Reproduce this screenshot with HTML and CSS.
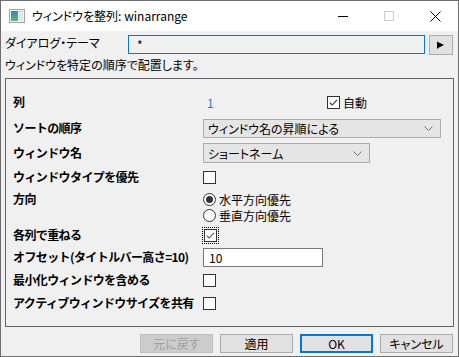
FILE: index.html
```html
<!DOCTYPE html>
<html lang="ja">
<head>
  <meta charset="UTF-8" />
  <title>ウィンドウを整列: winarrange</title>
  <link rel="stylesheet" href="styles.css">
</head>
<body>
  <div class="window">
    <div class="titlebar">
      <svg class="app-icon" width="16" height="14" viewBox="0 0 16 14">
        <defs>
          <linearGradient id="pane" x1="0" y1="0" x2="0" y2="1">
            <stop offset="0" stop-color="#3d7fc4"/>
            <stop offset="1" stop-color="#5fae83"/>
          </linearGradient>
        </defs>
        <rect x="0.5" y="0.5" width="15" height="13" fill="#f2f2f2" stroke="#a3a3a3"/>
        <rect x="2" y="2" width="7" height="10" fill="url(#pane)"/>
        <rect x="10" y="2" width="4" height="1" fill="#b9c7d3"/>
        <rect x="10" y="4" width="4" height="8" fill="#dfe5ea"/>
      </svg>
      <span class="title">ウィンドウを整列: winarrange</span>
      <div class="caption-btns">
        <span class="cap-btn">
          <svg width="10" height="10" viewBox="0 0 10 10"><path d="M0 5.5h10" stroke="#000"/></svg>
        </span>
        <span class="cap-btn">
          <svg width="10" height="10" viewBox="0 0 10 10"><rect x="0.5" y="0.5" width="9" height="9" fill="none" stroke="#cccccc"/></svg>
        </span>
        <span class="cap-btn">
          <svg width="11" height="11" viewBox="0 0 11 11"><path d="M0.5 0.5l10 10M10.5 0.5l-10 10" stroke="#000"/></svg>
        </span>
      </div>
    </div>

    <div class="content">
      <div class="theme-row">
        <span class="theme-label">ダイアログ・テーマ</span>
        <div class="theme-input">*</div>
        <span class="arrow-btn">
          <svg width="8" height="8" viewBox="0 0 8 8"><path d="M0 0.5L7 4L0 7.5z" fill="#000"/><path d="M0.5 4v3.5" stroke="#000"/></svg>
        </span>
      </div>

      <p class="desc">ウィンドウを特定の順序で配置します。</p>

      <div class="panel">
        <div class="row r-cols">
          <span class="label">列</span>
          <div class="ctrl">
            <span class="num">1</span>
            <span class="check-item">
              <svg class="box" width="13" height="13" viewBox="0 0 13 13"><rect x="0.5" y="0.5" width="12" height="12" fill="#fff" stroke="#333"/><path d="M2.8 6.6l2.4 2.4 4.8-5.2" fill="none" stroke="#333" stroke-width="1.1"/></svg>
              <span>自動</span>
            </span>
          </div>
        </div>

        <div class="row r-sort">
          <span class="label">ソートの順序</span>
          <div class="select sel-wide">
            <span>ウィンドウ名の昇順による</span>
            <svg width="9" height="5" viewBox="0 0 9 5"><path d="M0.5 0.5l4 4 4-4" fill="none" stroke="#707070"/></svg>
          </div>
        </div>

        <div class="row r-name">
          <span class="label">ウィンドウ名</span>
          <div class="select sel-narrow">
            <span>ショートネーム</span>
            <svg width="9" height="5" viewBox="0 0 9 5"><path d="M0.5 0.5l4 4 4-4" fill="none" stroke="#707070"/></svg>
          </div>
        </div>

        <div class="row r-type">
          <span class="label">ウィンドウタイプを優先</span>
          <span class="box-plain"></span>
        </div>

        <div class="row r-dir">
          <span class="label">方向</span>
          <div class="radios">
            <span class="radio-item"><span class="radio on"></span>水平方向優先</span>
            <span class="radio-item"><span class="radio"></span>垂直方向優先</span>
          </div>
        </div>

        <div class="row r-stack">
          <span class="label">各列で重ねる</span>
          <span class="focus">
            <svg width="13" height="13" viewBox="0 0 13 13"><rect x="0.5" y="0.5" width="12" height="12" fill="#fff" stroke="#333"/><path d="M2.8 6.6l2.4 2.4 4.8-5.2" fill="none" stroke="#555" stroke-width="1.1"/></svg>
          </span>
        </div>

        <div class="row r-offset">
          <span class="label">オフセット(タイトルバー高さ=10)</span>
          <div class="text-input">10</div>
        </div>

        <div class="row r-min">
          <span class="label">最小化ウィンドウを含める</span>
          <span class="box-plain"></span>
        </div>

        <div class="row r-share">
          <span class="label">アクティブウィンドウサイズを共有</span>
          <span class="box-plain"></span>
        </div>
      </div>

      <div class="buttons">
        <span class="btn disabled">元に戻す</span>
        <span class="btn">適用</span>
        <span class="btn default">OK</span>
        <span class="btn">キャンセル</span>
      </div>
    </div>
  </div>
</body>
</html>
```

FILE: styles.css
```css
* {
  box-sizing: border-box;
}

body {
  margin: 0;
  font-family: "Noto Sans CJK JP", "Noto Sans", sans-serif;
  font-size: 12px;
  color: #000;
  background: #f0f0f0;
}

.window {
  width: 459px;
  height: 357px;
  border: 1px solid #6e6e6e;
  background: #f0f0f0;
  font-feature-settings: "palt";
}

/* title bar */
.titlebar {
  height: 30px;
  background: #fff;
  display: flex;
  align-items: center;
}

.app-icon {
  margin-left: 8px;
  margin-right: 7px;
}

.title {
  font-size: 12px;
  line-height: 16px;
  flex-grow: 1;
}

.caption-btns {
  display: flex;
  height: 30px;
}

.cap-btn {
  width: 46px;
  height: 30px;
  display: flex;
  align-items: center;
  justify-content: center;
}

/* body */
.content {
  padding: 4px 4px 0 4px;
}

.theme-row {
  display: flex;
  align-items: flex-start;
}

.theme-label {
  width: 123px;
  line-height: 14px;
  padding-top: 1px;
}

.theme-input {
  width: 297px;
  height: 19px;
  border: 1px solid #0078d7;
  background: #f0f0f0;
  padding-left: 8px;
  line-height: 17px;
}

.arrow-btn {
  width: 24px;
  height: 20px;
  margin-left: 4px;
  border: 1px solid #adadad;
  background: #e1e1e1;
  display: flex;
  align-items: center;
  justify-content: center;
}

.desc {
  margin: 3px 0 0 0;
  line-height: 14px;
}

.panel {
  margin-top: 6px;
  width: 449px;
  border: 1px solid #646464;
  padding: 12px 0 13px 7px;
}

.row {
  display: flex;
  align-items: center;
}

.label {
  width: 190px;
  flex-shrink: 0;
  white-space: nowrap;
  font-weight: bold;
  line-height: 16px;
  letter-spacing: -0.6px;
  font-feature-settings: normal;
}

.r-cols { height: 22px; }
.r-sort { height: 30px; }
.r-name { height: 20px; }
.r-type { height: 28px; }
.r-dir { height: 32px; align-items: flex-start; }
.r-stack { height: 24px; }
.r-offset { height: 20px; }
.r-min { height: 26px; }
.r-share { height: 20px; }

.ctrl {
  display: flex;
  align-items: center;
}

.num {
  width: 124px;
  padding-left: 4px;
  color: #1a7fe0;
}

.check-item {
  display: flex;
  align-items: center;
  gap: 3px;
}

.box {
  display: block;
}

.select {
  height: 19px;
  border: 1px solid #adadad;
  background: #e5e5e5;
  display: flex;
  align-items: center;
  justify-content: space-between;
  padding: 0 7px 0 4px;
}

.sel-wide {
  width: 238px;
}

.sel-narrow {
  width: 167px;
  height: 20px;
}

.box-plain {
  width: 13px;
  height: 13px;
  border: 1px solid #333;
  background: #fff;
}

.radios {
  display: flex;
  flex-direction: column;
}

.radio-item {
  display: flex;
  align-items: center;
  height: 16px;
  gap: 3px;
}

.radio {
  width: 13px;
  height: 13px;
  border: 1px solid #333;
  border-radius: 50%;
  background: #fff;
  display: flex;
  align-items: center;
  justify-content: center;
}

.radio.on::after {
  content: "";
  width: 7px;
  height: 7px;
  border-radius: 50%;
  background: #333;
}

.focus {
  border: 1px dotted #000;
  padding: 1px;
  margin-left: -1px;
  display: flex;
}

.text-input {
  width: 120px;
  height: 19px;
  border: 1px solid #7a7a7a;
  background: #fff;
  padding-left: 5px;
  line-height: 17px;
}

/* bottom buttons */
.buttons {
  display: flex;
  justify-content: flex-end;
  gap: 7px;
  margin-top: 7px;
  padding-right: 1px;
}

.btn {
  width: 73px;
  height: 19px;
  border: 1px solid #adadad;
  background: #e1e1e1;
  text-align: center;
  line-height: 17px;
}

.btn.default {
  border: 2px solid #0078d7;
  line-height: 15px;
}

.btn.disabled {
  background: #cccccc;
  border-color: #bfbfbf;
  color: #a0a0a0;
}
```
